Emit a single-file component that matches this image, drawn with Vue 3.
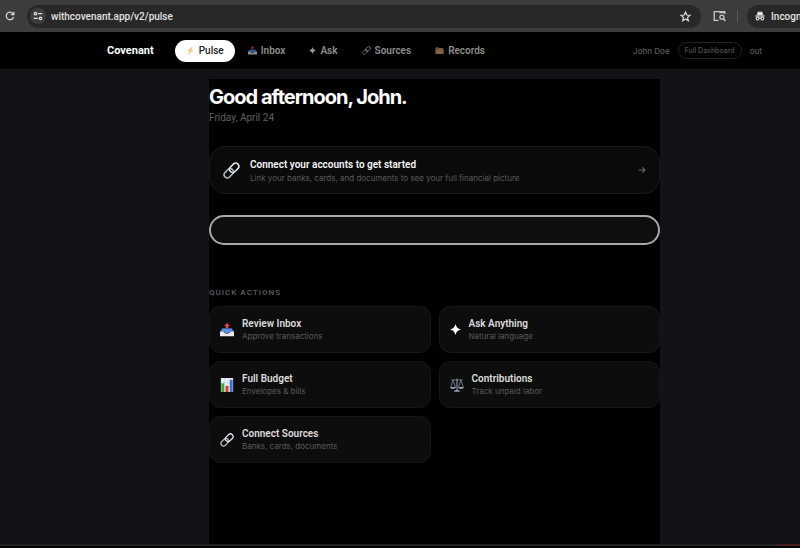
<script setup>
import { ref } from 'vue';

const navItems = [
  { label: 'Pulse', icon: 'bolt', active: true },
  { label: 'Inbox', icon: 'inbox' },
  { label: 'Ask', icon: 'spark' },
  { label: 'Sources', icon: 'chain' },
  { label: 'Records', icon: 'folder' },
];

const actions = [
  { title: 'Review Inbox', text: 'Approve transactions', icon: 'inbox' },
  { title: 'Ask Anything', text: 'Natural language', icon: 'spark' },
  { title: 'Full Budget', text: 'Envelopes & bills', icon: 'chart' },
  { title: 'Contributions', text: 'Track unpaid labor', icon: 'scales' },
  { title: 'Connect Sources', text: 'Banks, cards, documents', icon: 'chain' },
];

const address = ref('withcovenant.app/v2/pulse');
const question = ref('');
</script>

<template>
  <svg class="sprite" aria-hidden="true">
    <symbol id="bolt" viewBox="0 0 16 16">
      <path d="M13 0 2 9h4.500L3 16 14 6.800H9z" fill="#fbc873" />
    </symbol>
    <symbol id="inbox" viewBox="0 0 16 16">
      <path d="M2.600 6h10.800L16 10H0z" fill="#3f78c9" />
      <path d="M0 9.600h4.400c.5 1.600 1.600 2.400 3.600 2.400s3.100-.8 3.600-2.400H16V15H0z" fill="#e9e9ee" />
      <path d="M3 7h10l.9 2.600h-2.700c-.6 1.300-1.500 1.900-3.200 1.900s-2.600-.6-3.200-1.900H2.100z" fill="#5b93e6" />
      <path d="M8 0l3.200 3.300H9.500V6h-3V3.300H4.800z" fill="#e8483f" />
    </symbol>
    <symbol id="spark" viewBox="0 0 16 16">
      <path d="M8 0c1 4.600 3.400 7 8 8-4.600 1-7 3.400-8 8-1-4.600-3.400-7-8-8 4.600-1 7-3.400 8-8z" fill="#fff" />
    </symbol>
    <symbol id="chain" viewBox="0 0 16 16">
      <g fill="none" stroke-width="1.500" transform="rotate(-45 8 8)">
        <rect x="-.5" y="5" width="9.800" height="6" rx="3" stroke="#aab4c0" />
        <rect x="6.700" y="5" width="9.800" height="6" rx="3" stroke="#dde3ea" />
      </g>
    </symbol>
    <symbol id="folder" viewBox="0 0 16 16">
      <path d="M1 3.500c0-.8.400-1.200 1.200-1.200H6l1.300 1.400h6.500c.8 0 1.200.4 1.200 1.200V14H1z" fill="#b48a58" />
      <path d="M1 6h14v8H1z" fill="#d2a46b" />
    </symbol>
    <symbol id="chart" viewBox="0 0 16 16">
      <path d="M1 0h14v16H1z" fill="#e3edf3" />
      <path d="M1 5.300h14M1 10.500h14M5.500 0v16M10.500 0v16" stroke="#c0d3de" stroke-width=".6" />
      <path d="M1.500 6h3.300v10H1.500z" fill="#45a63c" />
      <path d="M6.300 9h3.300v7H6.300z" fill="#d93832" />
      <path d="M11.200 2h3.300v14h-3.300z" fill="#3c70cf" />
    </symbol>
    <symbol id="scales" viewBox="0 0 16 16">
      <g fill="none" stroke="#7e909f" stroke-width=".9">
        <path d="M1.500 2.200h13M3.500 2.200.8 10.500M3.500 2.200l2.700 8.300M12.500 2.200l-2.700 8.300M12.500 2.200l2.700 8.300" />
        <path d="M8 .5v14" stroke-width="1.400" />
      </g>
      <path d="M0 10.300h6.800c-.4 1.500-1.600 2.200-3.400 2.200S.4 11.800 0 10.300zM9.200 10.300H16c-.4 1.500-1.600 2.200-3.400 2.200s-3-.7-3.400-2.200zM4.500 15.800c.2-1.300 1.300-2 3.500-2s3.300.7 3.500 2z" fill="#8ea0af" />
    </symbol>
  </svg>

  <div class="window">
    <header class="toolbar">
      <button class="tool reload" aria-label="Reload">
        <svg viewBox="0 0 12 12" width="10" height="10" fill="none" stroke="#d6d6d6" stroke-width="1.500">
          <path d="M10.300 7.200A4.500 4.500 0 1 1 9.400 3L10.500 4.200" />
          <path d="M10.600.8v3.600H7" />
        </svg>
      </button>
      <div class="address">
        <button class="tool site-info" aria-label="Site information">
          <svg viewBox="0 0 12 12" width="10" height="10" fill="none" stroke="#dcdcdc" stroke-width="1.500">
            <circle cx="3" cy="3.200" r="1.500" />
            <path d="M6.200 3.200h5M.8 8.800h5" />
            <circle cx="9" cy="8.800" r="1.500" />
          </svg>
        </button>
        <input v-model="address" class="url" type="text" aria-label="Address" />
        <button class="tool" aria-label="Bookmark">
          <svg viewBox="0 0 12 12" width="11" height="11" fill="none" stroke="#dcdcdc" stroke-width="1.300">
            <path d="M6 1.200l1.400 3.200 3.500.3-2.700 2.300.9 3.500L6 8.600l-3.100 1.900.9-3.500L1.100 4.700l3.500-.3z" />
          </svg>
        </button>
      </div>
      <button class="tool" aria-label="Search tabs">
        <svg viewBox="0 0 13 12" width="13" height="12" fill="none" stroke="#c8c8c8" stroke-width="1.300">
          <path d="M5.500 10.300H1.200V1.700h10.600V4" />
          <path d="M6.500 2.300h5" stroke-width="1.800" />
          <circle cx="8.900" cy="7.200" r="2" />
          <path d="M10.400 8.800l2 2.200" stroke-width="1.600" />
        </svg>
      </button>
      <span class="divider"></span>
      <button class="tool incognito">
        <svg viewBox="0 0 12 12" width="10" height="10">
          <path d="M3.200 1h5.600l1 4H2.200z" fill="#e3e3e3" />
          <path d="M.5 6h11" stroke="#e3e3e3" stroke-width="1.400" />
          <g fill="none" stroke="#e3e3e3" stroke-width="1.300">
            <circle cx="3.200" cy="9" r="1.700" />
            <circle cx="8.800" cy="9" r="1.700" />
            <path d="M4.900 8.700h2.200" />
          </g>
        </svg>
        Incognito
      </button>
    </header>

    <div class="page">
      <div class="topbar">
        <div class="topbar-inner">
          <a class="brand" href="#">Covenant</a>
          <nav class="nav">
            <a
              v-for="item in navItems"
              :key="item.label"
              href="#"
              class="nav-link"
              :class="{ active: item.active }"
            >
              <svg class="nav-icon" :class="item.icon"><use :href="'#' + item.icon" /></svg>
              {{ item.label }}
            </a>
          </nav>
          <div class="account">
            <span>John Doe</span>
            <a class="dashboard" href="#">Full Dashboard</a>
            <a href="#">out</a>
          </div>
        </div>
      </div>

      <main class="content">
        <h1>Good afternoon, John.</h1>
        <p class="date">Friday, April 24</p>

        <a class="connect" href="#">
          <svg class="connect-icon"><use href="#chain" /></svg>
          <span class="card-text">
            <strong>Connect your accounts to get started</strong>
            <small>Link your banks, cards, and documents to see your full financial picture</small>
          </span>
          <svg class="arrow" viewBox="0 0 8 8" fill="none" stroke="#6a6a6a" stroke-width="1.100">
            <path d="M.5 4h6.500M4.300 1.300L7 4 4.300 6.700" />
          </svg>
        </a>

        <input v-model="question" class="question" type="text" aria-label="Ask a question" />

        <h2>Quick Actions</h2>
        <div class="actions">
          <a v-for="action in actions" :key="action.title" class="action" href="#">
            <svg class="action-icon" :class="action.icon"><use :href="'#' + action.icon" /></svg>
            <span class="card-text">
              <strong>{{ action.title }}</strong>
              <small>{{ action.text }}</small>
            </span>
          </a>
        </div>
      </main>
    </div>
    <footer class="edge"></footer>
  </div>
</template>

<style>
body {
  margin: 0;
  background: #111317;
}
</style>

<style scoped>
.sprite {
  position: absolute;
  width: 0;
  height: 0;
}
.window {
  display: flex;
  flex-direction: column;
  min-height: 100vh;
  overflow: hidden;
  background: #111317;
  color: #fff;
  font-family: Roboto, Inter, sans-serif;
  font-size: 10px;
}
a {
  color: inherit;
  text-decoration: none;
}
svg {
  flex: none;
}

/* browser toolbar */
.toolbar {
  display: flex;
  align-items: center;
  height: 32px;
  margin-right: -69px;
  padding-left: 4px;
  background: #3c3c3c;
}
.tool {
  display: flex;
  align-items: center;
  justify-content: center;
  flex: none;
  padding: 0;
  border: none;
  background: none;
  color: #e3e3e3;
  font: inherit;
}
.reload {
  width: 12px;
  margin-right: 11px;
}
.address {
  display: flex;
  align-items: center;
  flex: 1;
  height: 23px;
  padding: 0 10px 0 3px;
  border-radius: 12px;
  background: #282828;
}
.site-info {
  width: 16px;
  height: 16px;
  border-radius: 50%;
  background: #3c3c3c;
}
.url {
  flex: 1;
  min-width: 0;
  margin-left: 5px;
  padding: 0;
  border: none;
  outline: none;
  background: none;
  color: #e3e3e3;
  font: inherit;
  font-weight: 500;
}
.address + .tool {
  margin-left: 12px;
}
.divider {
  width: 1px;
  height: 11px;
  margin: 0 9px 0 11px;
  background: #5c5c5c;
}
.incognito {
  gap: 6px;
  justify-content: flex-start;
  box-sizing: border-box;
  width: 122px;
  height: 23px;
  padding-left: 8px;
  border-radius: 12px;
  background: #282828;
  font-weight: 500;
}

/* app */
.page {
  display: flex;
  flex-direction: column;
  flex: 1;
  margin-right: -69px;
}
.topbar {
  margin-bottom: 10px;
  background: #000;
}
.topbar-inner {
  display: flex;
  align-items: center;
  max-width: 655px;
  height: 37px;
  margin: 0 auto;
}
.brand {
  margin-right: 21px;
  font-size: 11px;
  font-weight: 700;
}
.nav {
  display: flex;
  gap: 2px;
}
.nav-link {
  display: flex;
  align-items: center;
  gap: 4px;
  height: 22px;
  padding: 0 11px;
  border-radius: 11px;
  color: #8c8c8c;
  font-weight: 600;
}
.nav-link.active {
  background: #fff;
  color: #222;
  font-weight: 500;
}
.nav-icon {
  width: 9px;
  height: 9px;
  opacity: 0.6;
}
.nav-icon.spark {
  width: 7px;
  height: 7px;
}
.nav-icon.bolt {
  opacity: 1;
}
.account {
  display: flex;
  align-items: center;
  gap: 8px;
  margin-left: auto;
  color: #5e5e5e;
  font-family: Inter, sans-serif;
  font-size: 8px;
  font-weight: 500;
}
.dashboard {
  padding: 0 6px;
  border: 1px solid #222;
  border-radius: 9px;
  color: #505050;
  font-size: 7px;
  line-height: 15px;
}
.content {
  flex: 1;
  width: 100%;
  max-width: 451px;
  margin: 0 auto;
  background: #000;
}
h1 {
  margin: 6px 0 0;
  font-family: Inter, sans-serif;
  font-size: 20px;
  font-weight: 700;
  line-height: 24px;
  letter-spacing: -1px;
}
.date {
  margin: 2px 0 21px;
  color: #606060;
  font-size: 10px;
  line-height: 14px;
}
.connect {
  display: flex;
  align-items: center;
  gap: 10px;
  box-sizing: border-box;
  height: 48px;
  padding: 0 13px;
  border: 1px solid #1a1a1a;
  border-radius: 16px;
  background: #0a0a0a;
}
.connect-icon {
  width: 17px;
  height: 17px;
}
.card-text {
  display: flex;
  flex-direction: column;
}
.card-text strong {
  color: #dcdcdc;
  font-size: 10px;
  font-weight: 600;
  line-height: 12px;
}
.card-text small {
  color: #5a5a5a;
  font-family: Inter, sans-serif;
  font-size: 8px;
  line-height: 12px;
}
.connect .card-text {
  gap: 1px;
  padding-top: 2px;
}
.connect strong {
  color: #f4f4f4;
}
.arrow {
  width: 8px;
  height: 8px;
  margin-left: auto;
}
.question {
  display: block;
  box-sizing: border-box;
  width: 100%;
  height: 30px;
  margin: 21px 0 42px;
  padding: 0 14px;
  border: 2px solid #a8a8a8;
  border-radius: 15px;
  outline: none;
  background: #0e0e0e;
  color: #fff;
  font: inherit;
}
h2 {
  margin: 0 0 7px;
  color: #585858;
  font-size: 8px;
  font-weight: 600;
  line-height: 12px;
  letter-spacing: 1px;
  text-transform: uppercase;
}
.actions {
  display: grid;
  grid-template-columns: 1fr 1fr;
  gap: 8px;
}
.action {
  display: flex;
  align-items: center;
  gap: 8px;
  box-sizing: border-box;
  height: 47px;
  padding: 0 10px;
  border: 1px solid #161616;
  border-radius: 11px;
  background: #0d0d0d;
}
.action-icon {
  width: 14px;
  height: 14px;
}
.action-icon.spark {
  width: 11px;
  height: 11px;
}
.edge {
  height: 2px;
  border-bottom: 2px solid #000;
  background: linear-gradient(to left, #4a1c1c 22px, #222 24px);
}
</style>
